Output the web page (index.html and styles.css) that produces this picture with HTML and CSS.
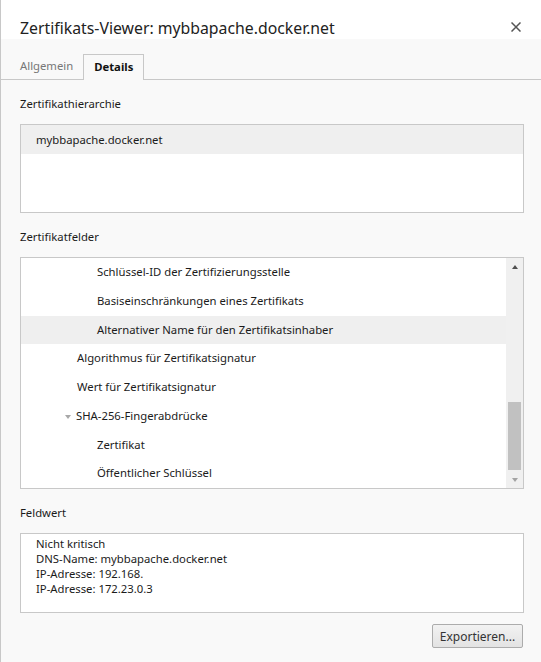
FILE: index.html
```html
<!DOCTYPE html>
<html lang="de">
<head>
<meta charset="utf-8">
<title>Zertifikats-Viewer</title>
<link rel="stylesheet" href="styles.css">
</head>
<body>
<div class="dialog">
  <header class="titlebar">
    <h1 class="title">Zertifikats-Viewer: mybbapache.docker.net</h1>
    <button class="close" aria-label="Schließen">
      <svg width="10" height="10" viewBox="0 0 10 10"><path d="M0.5 0.5L9.5 9.5M9.5 0.5L0.5 9.5" stroke="#555" stroke-width="1.5" fill="none"/></svg>
    </button>
  </header>
  <nav class="tabs">
    <span class="tab">Allgemein</span>
    <span class="tab active">Details</span>
  </nav>
  <main class="content">
    <section class="group">
      <div class="label">Zertifikathierarchie</div>
      <div class="box hierarchy">
        <div class="hrow selected">mybbapache.docker.net</div>
      </div>
    </section>
    <section class="group">
      <div class="label">Zertifikatfelder</div>
      <div class="box fields">
        <div class="list">
          <div class="frow lvl2">Schlüssel-ID der Zertifizierungsstelle</div>
          <div class="frow lvl2">Basiseinschränkungen eines Zertifikats</div>
          <div class="frow lvl2 selected">Alternativer Name für den Zertifikatsinhaber</div>
          <div class="frow lvl1">Algorithmus für Zertifikatsignatur</div>
          <div class="frow lvl1">Wert für Zertifikatsignatur</div>
          <div class="frow lvl1"><span class="twisty"></span>SHA-256-Fingerabdrücke</div>
          <div class="frow lvl2">Zertifikat</div>
          <div class="frow lvl2">Öffentlicher Schlüssel</div>
        </div>
        <div class="scrollbar">
          <span class="arrow up"></span>
          <span class="track"><span class="thumb"></span></span>
          <span class="arrow down"></span>
        </div>
      </div>
    </section>
    <section class="group">
      <div class="label">Feldwert</div>
      <div class="box value">
        <div>Nicht kritisch</div>
        <div>DNS-Name: mybbapache.docker.net</div>
        <div>IP-Adresse: 192.168.</div>
        <div>IP-Adresse: 172.23.0.3</div>
      </div>
    </section>
    <div class="actions">
      <button class="btn">Exportieren...</button>
    </div>
  </main>
</div>
</body>
</html>
```
FILE: styles.css
```css
html, body {
  margin: 0;
  padding: 0;
}
body {
  font-family: "Noto Sans", "Open Sans", sans-serif;
  font-size: 11.3px;
  color: #1b1b1b;
  background: #f9f9f9;
}
.dialog {
  width: 540px;
  height: 662px;
  border-left: 1px solid #c8c8c8;
  background: #f9f9f9;
  display: flex;
  flex-direction: column;
}
.titlebar {
  height: 39px;
  background: #ffffff;
  display: flex;
  align-items: center;
  justify-content: space-between;
  padding: 0 19px 0 19px;
}
.title {
  margin: 0;
  font-size: 15.8px;
  font-weight: normal;
  color: #222;
  padding-top: 16px;
}
.close {
  border: 0;
  background: transparent;
  padding: 0;
  margin-top: 14px;
  margin-right: 1px;
  width: 10px;
  height: 10px;
  display: flex;
}
.tabs {
  margin-top: 15px;
  height: 25px;
  border-bottom: 1px solid #c8c8c8;
  display: flex;
  padding-left: 8px;
}
.tab {
  height: 25px;
  line-height: 24px;
  padding: 0 10px 0 11px;
  color: #777;
  box-sizing: border-box;
}
.tab.active {
  color: #111;
  font-weight: bold;
  border: 1px solid #c8c8c8;
  border-bottom: 0;
  background: #f9f9f9;
  height: 26px;
  padding: 0 10px;
}
.content {
  padding: 15px 17px 0 19px;
  display: flex;
  flex-direction: column;
}
.group {
  margin-bottom: 15px;
}
.label {
  height: 18px;
  line-height: 18px;
  margin-bottom: 11px;
}
.box {
  border: 1px solid #c8c8c8;
  background: #fff;
  box-sizing: border-box;
}
.hierarchy {
  height: 89px;
}
.hrow {
  height: 29px;
  line-height: 29px;
  padding-left: 15px;
}
.selected {
  background: #efefef;
}
.fields {
  height: 232px;
  display: flex;
}
.list {
  flex: 1;
}
.frow {
  height: 28.75px;
  line-height: 28.75px;
  display: flex;
  align-items: center;
}
.lvl1 {
  padding-left: 56px;
}
.lvl2 {
  padding-left: 76px;
}
.twisty {
  width: 0;
  height: 0;
  border-left: 3.5px solid transparent;
  border-right: 3.5px solid transparent;
  border-top: 4px solid #a8a8a8;
  margin-left: -12px;
  margin-right: 5px;
  margin-top: 1px;
}
.scrollbar {
  width: 17px;
  background: #f0f0f0;
  display: flex;
  flex-direction: column;
  align-items: center;
}
.arrow {
  height: 17px;
  display: flex;
  align-items: center;
  justify-content: center;
}
.arrow.up::before {
  content: "";
  border-left: 3.5px solid transparent;
  border-right: 3.5px solid transparent;
  border-bottom: 4px solid #505050;
}
.arrow.down::before {
  content: "";
  border-left: 3.5px solid transparent;
  border-right: 3.5px solid transparent;
  border-top: 4px solid #a3a3a3;
}
.track {
  flex: 1;
  width: 13px;
  display: flex;
  flex-direction: column;
  justify-content: flex-end;
}
.thumb {
  height: 68px;
  background: #c1c1c1;
  margin-bottom: 1px;
}
.value {
  height: 80px;
  padding: 2px 0 0 15px;
  line-height: 15px;
}
.actions {
  display: flex;
  justify-content: flex-end;
  margin-top: -4px;
  padding-right: 1px;
}
.btn {
  width: 91px;
  height: 24px;
  border: 1px solid #acacac;
  border-radius: 2px;
  background: linear-gradient(#f2f2f2, #e3e3e3);
  font-family: inherit;
  font-size: 12px;
  color: #333;
  padding: 0;
}
```
